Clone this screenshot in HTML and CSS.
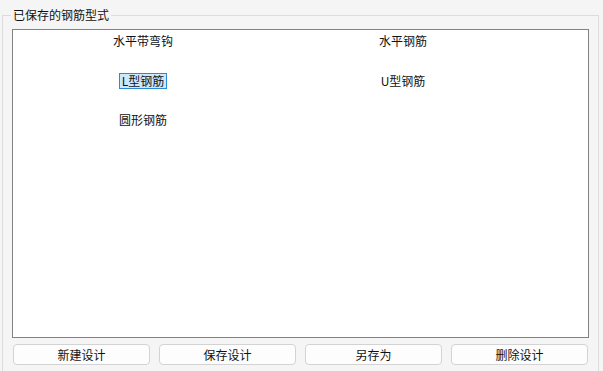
FILE: index.html
```html
<!DOCTYPE html>
<html lang="zh-CN">
<head>
<meta charset="utf-8">
<link rel="stylesheet" href="styles.css">
</head>
<body>
<fieldset class="group">
  <legend class="group-title">已保存的钢筋型式</legend>
  <div class="list">
    <div class="item"><span class="label">水平带弯钩</span></div>
    <div class="item"><span class="label">水平钢筋</span></div>
    <div class="item"><span class="label selected">L型钢筋</span></div>
    <div class="item"><span class="label">U型钢筋</span></div>
    <div class="item"><span class="label">圆形钢筋</span></div>
  </div>
  <div class="buttons">
    <button class="btn">新建设计</button>
    <button class="btn">保存设计</button>
    <button class="btn">另存为</button>
    <button class="btn">删除设计</button>
  </div>
</fieldset>
</body>
</html>
```

FILE: styles.css
```css
html, body {
  margin: 0;
  padding: 0;
  background: #f5f5f5;
  font-family: "Noto Sans CJK SC", "Noto Sans", sans-serif;
  font-size: 12px;
  color: #000;
  overflow: hidden;
}

.group {
  margin: 7px 4px 0 2px;
  padding: 6px 9px 12px 9px;
  border: 1px solid #dcdcdc;
  min-width: 0;
}

.group-title {
  margin-left: -1px;
  padding: 0 2px;
  line-height: 16px;
  height: 16px;
  color: #111;
}

.list {
  background: #fff;
  border: 1px solid #828282;
  display: grid;
  grid-template-columns: 260px 260px;
  grid-auto-rows: 39.5px;
  align-content: start;
  padding-top: 3px;
  box-sizing: border-box;
  height: 309px;
}

.item {
  display: flex;
  justify-content: center;
  align-items: flex-start;
}

.label {
  display: inline-block;
  line-height: 14px;
  padding: 0 2px;
  border: 1px solid transparent;
  white-space: nowrap;
  color: #111;
}

.label.selected {
  background: #cce8ff;
  border-color: #2b8ad8;
}

.buttons {
  display: grid;
  grid-template-columns: repeat(4, 1fr);
  column-gap: 9px;
  margin: 6px 1px 0 1px;
}

.btn {
  height: 21px;
  padding: 0;
  font-family: inherit;
  font-size: 12px;
  line-height: 19px;
  color: #111;
  background: #fdfdfd;
  border: 1px solid #d3d3d3;
  border-radius: 4px;
}
```
